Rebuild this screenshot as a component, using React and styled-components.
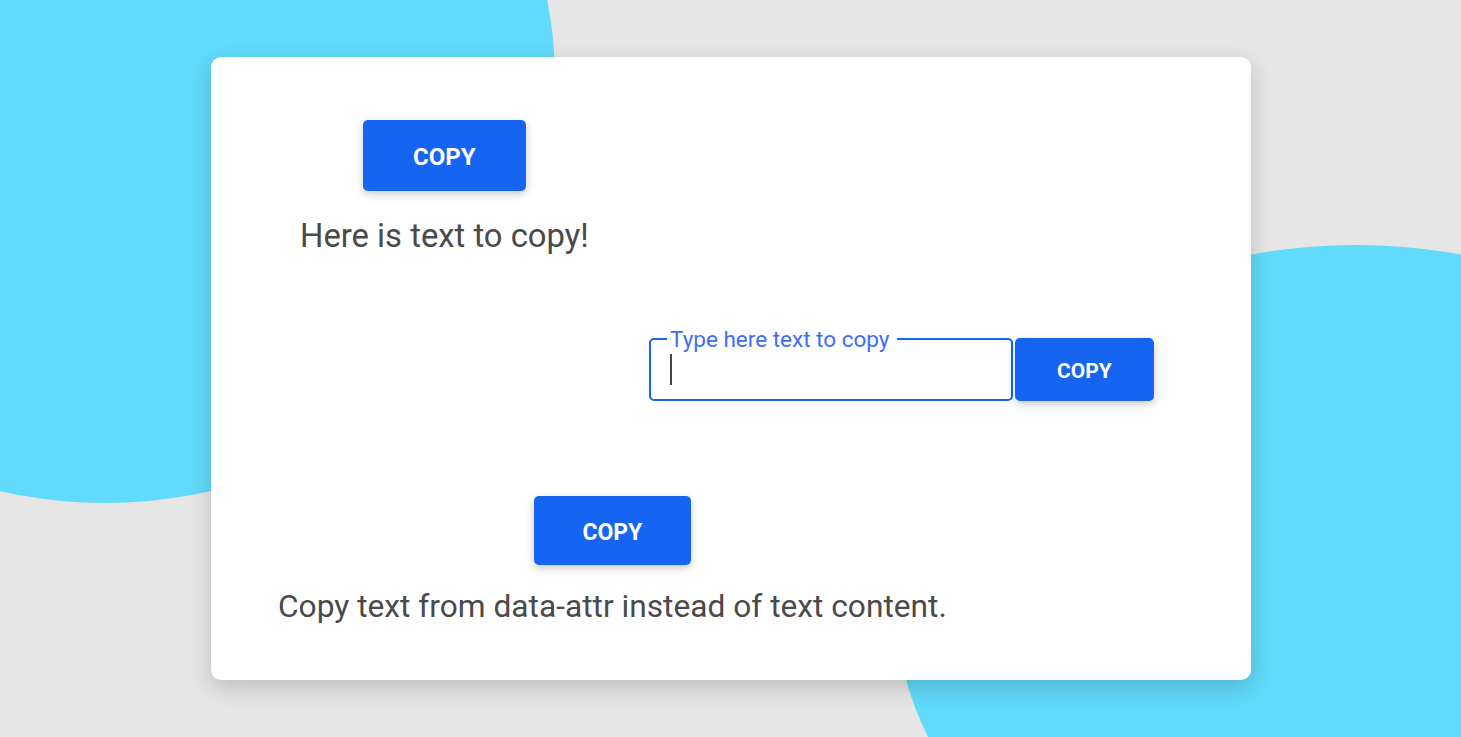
import styled, { createGlobalStyle } from "styled-components";

const Global = createGlobalStyle`
  html, body {
    margin: 0;
    padding: 0;
  }
  body {
    background: #e6e6e6;
    font-family: Roboto, "Liberation Sans", sans-serif;
    overflow: hidden;
  }
`;

const Page = styled.div`
  position: relative;
  width: 1461px;
  height: 737px;
  overflow: hidden;
  background: #e6e6e6;
  padding-top: 57px;
  box-sizing: border-box;
`;

// decorative blobs behind the card
const Blob = styled.div`
  position: absolute;
  background: #61dbfb;
  border-radius: 50%;
`;

const LeftBlob = styled(Blob)`
  left: -345px;
  top: -345px;
  width: 900px;
  height: 848px;
`;

const RightBlob = styled(Blob)`
  left: 896px;
  top: 245px;
  width: 920px;
  height: 720px;
`;

const Card = styled.div`
  position: relative;
  width: 1040px;
  height: 623px;
  margin-left: 211px;
  box-sizing: border-box;
  background: #fff;
  border-radius: 10px;
  box-shadow: 0 8px 24px rgba(0, 0, 0, 0.18);
  display: flex;
  flex-direction: column;
  align-items: flex-start;
`;

const Block = styled.div`
  display: flex;
  flex-direction: column;
  align-items: center;
  margin-left: ${(p) => p.left}px;
  margin-top: ${(p) => p.top}px;
`;

const CopyBtn = styled.button`
  width: ${(p) => p.w}px;
  height: ${(p) => p.h}px;
  margin-left: ${(p) => p.gap || 0}px;
  border: none;
  border-radius: 5px;
  background: #1565f2;
  color: #fff;
  font-family: Roboto, "Liberation Sans", sans-serif;
  font-weight: 700;
  font-size: ${(p) => p.size || 24}px;
  box-shadow: 0 3px 8px rgba(0, 0, 0, 0.22);
  cursor: pointer;
  padding: 3px 0 0;
`;

const Caption = styled.p`
  margin: ${(p) => p.gap}px 0 0;
  font-size: ${(p) => p.size || 32}px;
  color: #4a4a4a;
  line-height: 38px;
`;

const InputRow = styled.div`
  display: flex;
  align-items: flex-end;
  margin-left: 438px;
  margin-top: 73px;
`;

const Field = styled.fieldset`
  width: 364px;
  height: 73px;
  margin: 0;
  padding: 0 19px;
  box-sizing: border-box;
  border: 2px solid #1565f2;
  border-radius: 5px;
  display: flex;
  align-items: center;
`;

const Legend = styled.legend`
  padding: 0 8px 0 3px;
  margin-left: -3px;
  font-size: 22.5px;
  line-height: 22px;
  color: #3d6ef5;
`;

const Caret = styled.span`
  display: block;
  width: 2px;
  height: 31px;
  margin-top: -10px;
  background: #444;
`;

export default function App() {
  return (
    <Page>
      <Global />
      <LeftBlob />
      <RightBlob />
      <Card>
        <Block left={89} top={63}>
          <CopyBtn w={163} h={71}>COPY</CopyBtn>
          <Caption gap={26} size={32.8}>Here is text to copy!</Caption>
        </Block>
        <InputRow>
          <Field>
            <Legend>Type here text to copy</Legend>
            <Caret />
          </Field>
          <CopyBtn w={139} h={63} size={21} gap={2}>
            COPY
          </CopyBtn>
        </InputRow>
        <Block left={67} top={95}>
          <CopyBtn w={157} h={69} size={23}>COPY</CopyBtn>
          <Caption gap={23} size={31.7}>Copy text from data-attr instead of text content.</Caption>
        </Block>
      </Card>
    </Page>
  );
}
